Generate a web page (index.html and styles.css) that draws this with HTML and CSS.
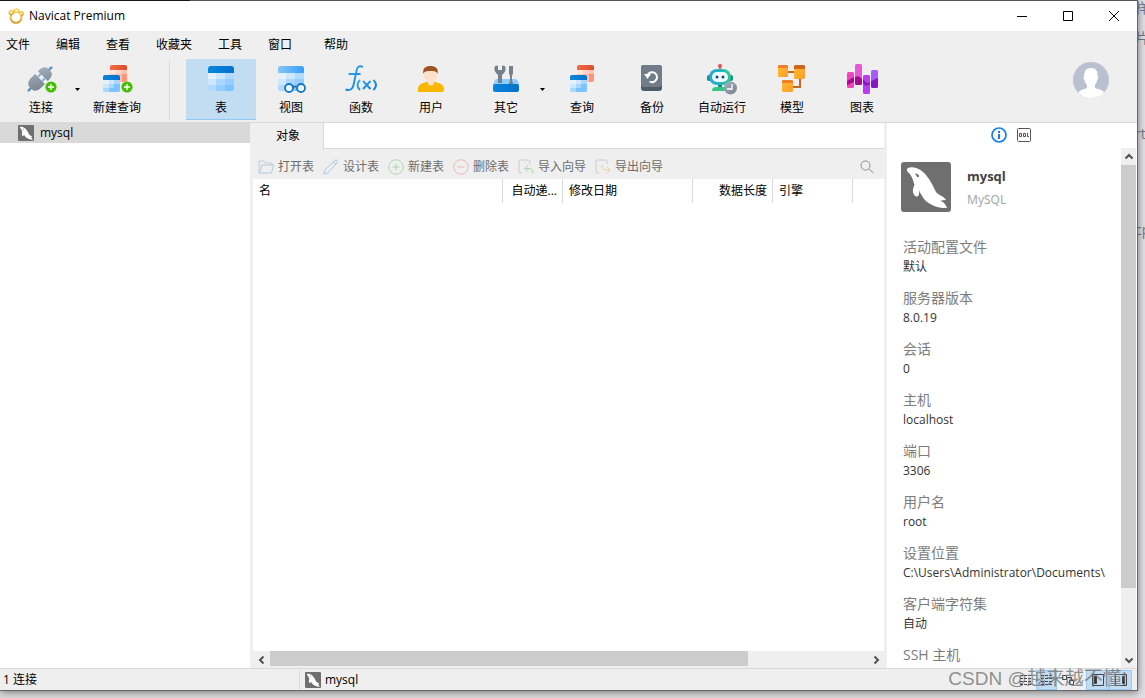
FILE: index.html
```html
<!DOCTYPE html>
<html lang="zh-CN">
<head>
<meta charset="utf-8">
<title>Navicat Premium</title>
<link rel="stylesheet" href="styles.css">
</head>
<body>
<svg class="defs" aria-hidden="true">
  <defs>
    <linearGradient id="g-head" x1="0" x2="1"><stop offset="0" stop-color="#0a86dc"/><stop offset="1" stop-color="#0272cc"/></linearGradient>
    <linearGradient id="g-view" x1="0" x2="1"><stop offset="0" stop-color="#85c5fb"/><stop offset="1" stop-color="#369ff6"/></linearGradient>
    <linearGradient id="g-red" x1="0" x2="1"><stop offset="0" stop-color="#f56a48"/><stop offset="1" stop-color="#d94e28"/></linearGradient>
    <linearGradient id="g-steel" x1="0" y1="0" x2="1" y2="1"><stop offset="0" stop-color="#a3b0bd"/><stop offset="1" stop-color="#77838f"/></linearGradient>
    <linearGradient id="g-fx" x1="0" y1="0" x2="1" y2="1"><stop offset="0" stop-color="#3aaaf8"/><stop offset="1" stop-color="#0a7ad5"/></linearGradient>
    <linearGradient id="g-bot" x1="0" x2="1"><stop offset="0" stop-color="#20a5e2"/><stop offset="1" stop-color="#2dc98c"/></linearGradient>
    <linearGradient id="g-gold" x1="0" y1="0" x2="0" y2="1"><stop offset="0" stop-color="#fbd85d"/><stop offset="1" stop-color="#d59a22"/></linearGradient>
    <linearGradient id="g-orange" x1="0" y1="0" x2="1" y2="1"><stop offset="0" stop-color="#ffbd2e"/><stop offset="1" stop-color="#ff9b2f"/></linearGradient>
    <clipPath id="c-grid"><rect width="26" height="25" rx="3"/></clipPath>
    <clipPath id="c-small"><rect width="17" height="17" rx="2"/></clipPath>
    <symbol id="cells" viewBox="0 0 26 25">
      <g clip-path="url(#c-grid)">
        <rect width="26" height="25" fill="#aad7ff"/>
        <path fill="#e3f2ff" d="M0 7h8v6H0z"/><path fill="#cce7ff" d="M8 7h9v6H8zM0 13h8v6H0z"/>
        <path fill="#b1daff" d="M17 7h9v6h-9zM0 19h8v6H0z"/><path fill="#94ceff" d="M17 13h9v6h-9zM8 19h9v6H8z"/><path fill="#7dc4ff" d="M17 19h9v6h-9z"/>
      </g>
    </symbol>
    <symbol id="query" viewBox="0 0 24 27">
      <g transform="translate(7 0)"><g clip-path="url(#c-small)"><rect width="17" height="17" fill="#ffc0b0"/><path fill="#ffe6df" d="M0 5h6v4H0z"/><path fill="#ffd2c6" d="M6 5h6v4H6z"/><path fill="#ff9578" d="M12 9h5v8h-5z"/><rect width="17" height="5" fill="url(#g-red)"/></g></g>
      <g transform="translate(0 10)"><g clip-path="url(#c-small)"><rect width="17" height="17" fill="#aad7ff"/><path fill="#e3f2ff" d="M0 5h6v4H0z"/><path fill="#cce7ff" d="M6 5h5v4H6zM0 9h6v4H0z"/><path fill="#7dc4ff" d="M11 9h6v8h-6zM6 13h5v4H6z"/><rect width="17" height="5" fill="url(#g-head)"/></g></g>
    </symbol>
    <symbol id="plus" viewBox="0 0 12 12"><circle cx="6" cy="6" r="5.6" fill="#45bd05"/><path d="M3 6h6M6 3v6" stroke="#fff" stroke-width="1.3"/></symbol>
    <symbol id="dolphin" viewBox="0 0 50 50">
      <rect width="50" height="50" rx="3" fill="#6f6f6f"/>
      <path fill="#fff" d="M7 6C10 4 18 6 22 10C28 15 32 24 35 30C37 33 43 34 45 38L39.500 38.500C43 40 45 43 46 46C38 46.500 28 43 23 37C21 34 19 31 18 28C18.500 32 18 35 15 34.500C12 33 10.500 28 13.500 23C12 18 11 14 8 11C6 10 5 7 7 6z"/>
      <path fill="#6f6f6f" d="M14 11.500c2 0 4 1 4 2.500s-1.500 1.500-2.200.5z"/>
    </symbol>
  </defs>
</svg>

<div class="desktop">
  <aside class="backdrop" aria-hidden="true">
    <span class="scrap scrap-a">样</span><span class="scrap scrap-b">片</span><span class="scrap scrap-c">rt</span><span class="scrap scrap-d">cp</span>
  </aside>
  <main class="window">
    <header class="titlebar">
      <svg class="app-logo" viewBox="0 0 17 17" fill="none" stroke="url(#g-gold)"><circle cx="8.500" cy="10" r="5.800" stroke-width="2"/><path stroke-width="1.500" d="M3.500 7C1.500 7 .8 5 2 3.500S5.300 2.500 6 4M7 5C6 3 7 1 9 1s3 1.500 2.500 3.500M12 5c1-1.500 3-1.500 3.700 0s.3 3-1.500 3.500M3 8l3-3"/></svg>
      <h1 class="app-title">Navicat Premium</h1>
      <div class="window-controls">
        <button class="control" aria-label="最小化"><svg viewBox="0 0 10 10"><path d="M0 5.500h10"/></svg></button>
        <button class="control" aria-label="最大化"><svg viewBox="0 0 10 10"><path d="M.5.5h9v9h-9z"/></svg></button>
        <button class="control" aria-label="关闭"><svg viewBox="0 0 10 10"><path d="M0 0l10 10M10 0L0 10"/></svg></button>
      </div>
    </header>

    <nav class="menubar">
      <button>文件</button><button>编辑</button><button>查看</button><button>收藏夹</button><button>工具</button><button>窗口</button><button class="menu-help">帮助</button>
    </nav>

    <div class="toolbar">
      <div class="split">
        <button class="tool tool-split">
          <svg class="tool-icon" viewBox="0 0 32 32"><g transform="rotate(45 15 16)"><path d="M15-1v6M15 27v6" stroke="#5e93bd" stroke-width="2.500"/><path d="M12 10v6M18 10v6" stroke="#77b5df" stroke-width="2"/><path fill="url(#g-steel)" d="M12 3h6c3 1 4 4 4 9H8c0-5 1-8 4-9zM8 16h14v5c0 5-2 7-4 8h-6c-2-1-4-3-4-8z"/></g><use href="#plus" x="20" y="18" width="12" height="12"/></svg>
          <span>连接</span>
        </button>
        <button class="drop" aria-label="连接选项"><svg viewBox="0 0 5 3"><path d="M0 0h5L2.500 3z"/></svg></button>
      </div>
      <button class="tool">
        <svg class="tool-icon" viewBox="0 0 32 32"><use href="#query" x="2" y="2" width="24" height="27"/><use href="#plus" x="20" y="18" width="12" height="12"/></svg>
        <span>新建查询</span>
      </button>
      <span class="tool-separator"></span>
      <button class="tool is-active">
        <svg class="tool-icon" viewBox="0 0 32 32"><use href="#cells" x="3" y="3" width="26" height="25"/><path fill="url(#g-head)" d="M3 10V6a3 3 0 0 1 3-3h20a3 3 0 0 1 3 3v4z"/></svg>
        <span>表</span>
      </button>
      <button class="tool">
        <svg class="tool-icon" viewBox="0 0 32 32"><use href="#cells" x="3" y="3" width="26" height="25"/><path fill="url(#g-view)" d="M3 10V6a3 3 0 0 1 3-3h20a3 3 0 0 1 3 3v4z"/><g fill="#eef8ff" stroke="#1477c4" stroke-width="1.800"><path d="M17 24q2-1 4 0"/><circle cx="14" cy="25" r="4"/><circle cx="26" cy="25" r="4"/></g></svg>
        <span>视图</span>
      </button>
      <button class="tool">
        <svg class="tool-icon" viewBox="0 0 32 32" fill="none" stroke="url(#g-fx)" stroke-width="1.900"><path d="M18 4c-4-2-6 0-6.500 4L8.500 22c-.8 4-3 6-8 4.500M3.500 11h12"/><path d="M15 17q-5 5 0 10M28.500 17q5 5 0 10M18 18l7.500 8M25.500 18L18 26"/></svg>
        <span>函数</span>
      </button>
      <button class="tool">
        <svg class="tool-icon" viewBox="0 0 32 32"><path fill="#f9b700" d="M3 29v-4c1-4 5-5 8-6h9c4 1 8 2 9 6v2l-1 2z"/><path fill="#ffe0ca" d="M9 9q6-3 13 0c1 5-1 8-3 10v2q-3 3-6 0v-2c-2-2-5-5-4-10z"/><path fill="#9e5421" d="M8.500 11C7 5 11 3 15.500 3s8.500 2 7 8c-1-3-3-3-7-3s-6 0-7 3z"/></svg>
        <span>用户</span>
      </button>
      <div class="split">
        <button class="tool tool-split">
          <svg class="tool-icon" viewBox="0 0 32 32"><path fill="#8cccff" d="M3 22l2-5q1-1 3-1h17q2 0 3 2l1 4z"/><path fill="#74808b" d="M5 3l3-.5V7h4V2.500l3 .5q2 5-3 9v8H8v-8Q3 8 5 3zM19 3h4v7l-1 3v4l1 4h-4l1-4v-4l-1-3z"/><rect x="3" y="21" width="26" height="8" rx="2" fill="url(#g-head)"/></svg>
          <span>其它</span>
        </button>
        <button class="drop" aria-label="其它选项"><svg viewBox="0 0 5 3"><path d="M0 0h5L2.500 3z"/></svg></button>
      </div>
      <button class="tool">
        <svg class="tool-icon" viewBox="0 0 32 32"><use href="#query" x="4" y="2" width="24" height="27"/></svg>
        <span>查询</span>
      </button>
      <button class="tool">
        <svg class="tool-icon" viewBox="0 0 32 32"><rect x="5" y="2" width="21" height="26" rx="3" fill="#505c65"/><rect x="5" y="2" width="21" height="22" rx="3" fill="#707d88"/><path fill="none" stroke="#fff" stroke-width="2" d="M11.500 12a5 5 0 1 1 2 6.500"/><path fill="#fff" d="M8 11h7l-3.500 5z"/></svg>
        <span>备份</span>
      </button>
      <button class="tool">
        <svg class="tool-icon" viewBox="0 0 32 32"><path d="M14 4v4" stroke="#d35251" stroke-width="1.500"/><circle cx="14" cy="3" r="2" fill="#ef4a4b"/><rect x="1" y="12" width="26" height="6" rx="2" fill="#128d88"/><path fill="#108a88" d="M12 21h4v4h-4z"/><path fill="#31c787" d="M6 28q0-4 4-4h12v4z"/><rect x="3" y="6" width="22" height="16" rx="8" fill="url(#g-bot)"/><rect x="6" y="9" width="16" height="10" rx="5" fill="#effaff"/><circle cx="11" cy="14" r="1.500" fill="#17488f"/><circle cx="17" cy="14" r="1.500" fill="#17488f"/><circle cx="24.500" cy="25" r="6.500" fill="url(#g-steel)"/><path fill="none" stroke="#fff" stroke-width="1.300" d="M26 21v5h-5"/></svg>
        <span>自动运行</span>
      </button>
      <button class="tool">
        <svg class="tool-icon" viewBox="0 0 32 32"><path d="M12 9h8M24 14v10h-8" fill="none" stroke="#c06a21" stroke-width="2"/><g fill="url(#g-orange)"><rect x="2" y="2" width="10" height="12" rx="1.500"/><rect x="18" y="2" width="11" height="14" rx="1.500"/><rect x="6" y="17" width="11" height="12" rx="1.500"/></g><path fill="#f27d2d" d="M2 5V3l1-1h8l1 1v2zM6 20v-2l1-1h9l1 1v2z"/><path fill="#cf681c" d="M18 6V3l1-1h9l1 1v3z"/></svg>
        <span>模型</span>
      </button>
      <button class="tool">
        <svg class="tool-icon" viewBox="0 0 32 32"><rect x="1" y="9" width="7" height="16" rx="1.500" fill="#f444ba"/><rect x="9" y="1" width="7" height="21" rx="1.500" fill="#e659d4"/><rect x="17" y="12" width="7" height="19" rx="1.500" fill="#b93cf0"/><rect x="25" y="7" width="7" height="18" rx="1.500" fill="#a45cff"/><path fill="#a90992" d="M1 18l7-4v5l-7 3zM9 14q4-2 7 2v5l-1 1h-5l-1-1z"/><path fill="#8518c6" d="M17 16q4 6 7 3v2q-4 4-7-1zM25 18l7-3v8l-1 2h-5l-1-2z"/></svg>
        <span>图表</span>
      </button>
      <button class="avatar" aria-label="用户帐户"><svg viewBox="0 0 36 36"><circle cx="18" cy="18" r="18" fill="#b9c1d0"/><path fill="#fff" d="M18 6c5 0 7 3 6.500 8 1 .5 1 3-.3 4-.5 3-2 4-2.200 5v3c3 1.500 7 1 9 4.500C27 35 22 36 18 36S9 35 5.500 30.500C8 27 11 27.500 14 26v-3c-.5-1-2-2-2.500-5-1-1-1.300-3.500-.2-4C11 9 13 6 18 6z"/></svg></button>
    </div>

    <div class="workspace">
      <ul class="connections">
        <li class="connection"><svg class="mini-logo"><use href="#dolphin"/></svg>mysql</li>
      </ul>

      <section class="objects">
        <div class="tabs"><button class="tab">对象</button><div class="tabs-rest"></div></div>
        <div class="object-tools">
          <button disabled><svg viewBox="0 0 16 16"><path stroke="#c5cdd3" d="M1 13V2h5l1 2h7v2"/><path stroke="#a9c9e2" d="M1 14L4 6h11.500l-2 8z"/></svg>打开表</button>
          <button disabled><svg viewBox="0 0 16 16"><path stroke="#a9c9e2" d="M.8 15l1-4L12 1.500q1-1 2 0t0 2.500L4.500 14zM10.500 3l2.500 2.500"/></svg>设计表</button>
          <button disabled><svg viewBox="0 0 16 16"><path stroke="#b3d6ae" d="M8 .8a7.200 7.200 0 1 0 .01 0M4.500 8h7M8 4.500v7"/></svg>新建表</button>
          <button disabled><svg viewBox="0 0 16 16"><path stroke="#e9b8b5" d="M8 .8a7.200 7.200 0 1 0 .01 0M4.500 8h7"/></svg>删除表</button>
          <button disabled><svg viewBox="0 0 16 16"><path stroke="#c8c8c8" d="M4 14H2.500Q1 14 1 12.500V2.500Q1 1 2.500 1h8Q12 1 12 2.500V5"/><path stroke="#a9d6a6" d="M10 6L7 9.500l3 3M7 9.500h4q4 0 4 5"/></svg>导入向导</button>
          <button disabled><svg viewBox="0 0 16 16"><path stroke="#c8c8c8" d="M4 14H2.500Q1 14 1 12.500V2.500Q1 1 2.500 1h8Q12 1 12 2.500V5"/><path stroke="#efcda5" d="M7 6q0 5 4 5h4M12 8l3 3-3 3.500"/></svg>导出向导</button>
          <button class="search" aria-label="搜索"><svg viewBox="0 0 16 16"><path stroke="#888" d="M6.500 2a4.500 4.500 0 1 0 .01 0M10 10l4.500 4"/></svg></button>
        </div>
        <div class="object-list">
          <table>
            <colgroup><col class="col-name"><col class="col-auto"><col class="col-date"><col class="col-size"><col class="col-engine"><col></colgroup>
            <thead><tr><th scope="col">名</th><th scope="col" class="right">自动递...</th><th scope="col">修改日期</th><th scope="col" class="right">数据长度</th><th scope="col">引擎</th><td></td></tr></thead>
          </table>
        </div>
        <div class="scroll-x">
          <button aria-label="向左滚动"><svg viewBox="0 0 10 10"><path d="M6.500 1.500L3 5l3.500 3.500"/></svg></button>
          <div class="track"><div class="thumb"></div></div>
          <button aria-label="向右滚动"><svg viewBox="0 0 10 10"><path d="M3.500 1.500L7 5 3.500 8.500"/></svg></button>
        </div>
      </section>

      <aside class="info">
        <div class="info-tabs">
          <button aria-label="信息"><svg viewBox="0 0 16 16"><circle cx="8" cy="8" r="7" fill="none" stroke="#147df5" stroke-width="1.700"/><path fill="#147df5" d="M7 4h2v2H7zM7 7h2v5H7z"/></svg></button>
          <button aria-label="DDL"><svg viewBox="0 0 16 16" fill="none" stroke="#555"><rect x="1.500" y="1.500" width="13" height="13" rx="1"/><path d="M3.500 6.500h2v3h-2zM7.500 6.500h2v3h-2zM11.500 6v3.500H13"/></svg></button>
        </div>
        <div class="info-body">
          <div class="info-content">
            <div class="identity">
              <svg class="logo"><use href="#dolphin"/></svg>
              <div><h2>mysql</h2><p>MySQL</p></div>
            </div>
            <dl>
              <div><dt>活动配置文件</dt><dd>默认</dd></div>
              <div><dt>服务器版本</dt><dd>8.0.19</dd></div>
              <div><dt>会话</dt><dd>0</dd></div>
              <div><dt>主机</dt><dd>localhost</dd></div>
              <div><dt>端口</dt><dd>3306</dd></div>
              <div><dt>用户名</dt><dd>root</dd></div>
              <div><dt>设置位置</dt><dd>C:\Users\Administrator\Documents\</dd></div>
              <div><dt>客户端字符集</dt><dd>自动</dd></div>
              <div><dt>SSH 主机</dt><dd></dd></div>
            </dl>
          </div>
          <div class="scroll-y">
            <button aria-label="向上滚动"><svg viewBox="0 0 10 10"><path d="M1.500 6.500L5 3l3.500 3.500"/></svg></button>
            <div class="track"><div class="thumb"></div></div>
            <button aria-label="向下滚动"><svg viewBox="0 0 10 10"><path d="M1.500 3.500L5 7l3.500-3.500"/></svg></button>
          </div>
        </div>
      </aside>
    </div>

    <footer class="statusbar">
      <span class="status-count">1 连接</span>
      <span class="status-connection"><svg class="mini-logo"><use href="#dolphin"/></svg>mysql</span>
      <div class="view-buttons">
        <button aria-label="列表"><svg viewBox="0 0 16 16"><path stroke-dasharray="3 1" d="M2 3.500h12M2 6.500h12M2 9.500h12M2 12.500h12"/></svg></button>
        <button class="is-on" aria-label="详细信息"><svg viewBox="0 0 16 16"><path stroke-dasharray="3 1" d="M2 3.500h12M2 6.500h12M2 9.500h12M2 12.500h12"/></svg></button>
        <button aria-label="ER 图表"><svg viewBox="0 0 16 16"><path d="M2.500 3.500h4v4h-4zM9.500 8.500h4v4h-4zM7 5.500h4.500v3"/></svg></button>
      </div>
      <div class="view-buttons panes">
        <button class="is-on" aria-label="导航窗格"><svg viewBox="0 0 16 16"><path d="M2.500 2.500h11v11h-11z"/><path fill="#333" d="M4.500 4.500h2v7h-2z"/></svg></button>
        <button class="is-on" aria-label="信息窗格"><svg viewBox="0 0 16 16"><path d="M2.500 2.500h11v11h-11z"/><path fill="#333" d="M9.500 4.500h2v7h-2z"/></svg></button>
      </div>
    </footer>
  </main>
  <p class="watermark">CSDN @越来越不懂!</p>
</div>
</body>
</html>
```
FILE: styles.css
```css
:root {
  --chrome: #efefef;
  --line: #d9d9d9;
  --thumb: #cccccc;
  --blue: #c2dcf2;
}

* { box-sizing: border-box; }

body {
  margin: 0;
  font: 12px/16px "Open Sans", "Noto Sans CJK SC", sans-serif;
  color: #000;
}

button {
  margin: 0;
  padding: 0;
  border: 0;
  background: none;
  font: inherit;
  color: inherit;
}

h1, h2, p, ul, dl, dd { margin: 0; padding: 0; font-weight: normal; }
svg { display: block; flex: none; }
.defs { position: absolute; width: 0; height: 0; }

.desktop {
  position: relative;
  height: 100vh;
  padding: 1px 7px 7px 0;
  background: linear-gradient(90deg, #1d1a1d 0 190px, #666 190px) top / 100% 1px no-repeat, #dedede;
  overflow: hidden;
}

/* Page showing behind the window's right edge */
.backdrop {
  position: absolute;
  inset: 0 0 0 auto;
  width: 7px;
  overflow: hidden;
  color: #77778c;
  font-size: 14px;
  background: #e2e2e5;
}
.scrap { position: absolute; left: -3px; }
.scrap-a { top: 0; }
.scrap-b { top: 30px; }
.scrap-c { top: 126px; }
.scrap-d { top: 222px; }

.window {
  position: relative;
  display: flex;
  flex-direction: column;
  height: 100%;
  background: #fff;
  border: solid #68686a;
  border-width: 0 1px 1px 0;
  box-shadow: 0 1px 8px rgba(0, 0, 0, .5);
}

.titlebar { display: flex; align-items: center; height: 30px; padding-left: 8px; }
.app-logo { width: 16px; height: 16px; }
.app-title { margin-left: 5px; font-size: 12px; }
.window-controls { display: flex; align-self: stretch; margin-left: auto; }
.control { display: grid; place-items: center; width: 46px; }
.control svg { width: 10px; height: 10px; fill: none; stroke: #000; overflow: visible; }

.menubar { display: flex; align-items: center; gap: 26px; height: 27px; padding-left: 6px; background: var(--chrome); }
.menu-help { margin-left: 6px; }

.toolbar {
  display: flex;
  align-items: center;
  height: 65px;
  padding: 1px 28px 2px 1px;
  background: var(--chrome);
  border-bottom: 1px solid var(--line);
}
.split { display: flex; align-items: center; margin: 0 0 0 8px; }
.tool {
  display: flex;
  flex-direction: column;
  align-items: center;
  gap: 5px;
  width: 70px;
  height: 61px;
  padding-top: 4px;
  white-space: nowrap;
}
.tool-split { width: 64px; }
.tool.is-active { background: var(--blue); border-bottom: 1px solid #90c8f6; }
.tool-icon { width: 32px; height: 32px; }
.drop { display: grid; place-items: center; width: 9px; }
.drop svg { width: 5px; height: 3px; }
.tool-separator { align-self: center; width: 1px; height: 59px; margin: 0 16px 0 17px; background: var(--line); }
.avatar { align-self: flex-start; margin: 3px 0 0 auto; }
.avatar svg { width: 36px; height: 36px; }

.workspace { display: flex; flex: 1; min-height: 0; background: var(--chrome); }
.connections { width: 250px; flex: none; background: #fff; list-style: none; }
.connection { display: flex; align-items: center; gap: 6px; height: 20px; padding-left: 18px; background: var(--line); }
.mini-logo { width: 16px; height: 16px; }

.objects { display: flex; flex-direction: column; flex: 1; min-width: 0; padding: 0 3px; }
.tabs { display: flex; height: 26px; }
.tab { width: 70px; }
.tabs-rest { flex: 1; background: #fff; border: solid var(--line); border-width: 0 0 1px 1px; }
.object-tools { display: flex; align-items: center; gap: 9px; height: 30px; padding: 5px 9px 0 5px; }
.object-tools button { display: flex; align-items: center; gap: 4px; color: #6d6d6d; white-space: nowrap; }
.object-tools svg { width: 16px; height: 16px; fill: none; }
.object-tools .search { margin-left: auto; }

.object-list { flex: 1; background: #fff; overflow: hidden; }
table { width: 100%; table-layout: fixed; border-spacing: 0; }
th, td { height: 24px; padding: 0 5px; border-right: 1px solid var(--line); font-weight: normal; text-align: left; white-space: nowrap; }
td { border-right: 0; }
th { padding-left: 6px; }
th.right { text-align: right; }
.col-name { width: 250px; }
.col-auto { width: 60px; }
.col-date { width: 130px; }
.col-size, .col-engine { width: 80px; }

.scroll-x { display: flex; height: 17px; }
.scroll-x button, .scroll-y button { display: grid; place-items: center; width: 17px; height: 17px; }
.scroll-x .track, .scroll-y .track { flex: 1; }
.scroll-x .thumb { width: 80%; height: 15px; background: var(--thumb); }
.scroll-x svg, .scroll-y svg { width: 10px; height: 10px; fill: none; stroke: #505050; stroke-width: 2; }

.info { display: flex; flex-direction: column; width: 250px; flex: none; padding-right: 1px; background: #fff; }
.info-tabs { display: flex; align-items: center; justify-content: center; gap: 9px; height: 25px; padding-bottom: 1px; flex: none; }
.info-tabs svg { width: 16px; height: 16px; }
.info-body { display: flex; flex: 1; min-height: 0; }
.info-content { flex: 1; min-width: 0; padding: 14px 0 0 14px; overflow: hidden; }
.identity { display: flex; gap: 16px; }
.logo { width: 50px; height: 50px; }
.identity h2 { padding-top: 6px; font-size: 13px; font-weight: bold; color: #444; }
.identity p { padding-top: 8px; font-family: "Noto Sans", sans-serif; color: #a8a8a8; }
dl { padding: 25px 0 0 2px; }
dl div { height: 51px; }
dt { font-size: 14px; line-height: 20px; color: #7d7d7d; }
dd { line-height: 20px; color: #333; white-space: nowrap; }
.scroll-y { display: flex; flex-direction: column; width: 15px; background: var(--chrome); }
.scroll-y button { width: 15px; }
.scroll-y .thumb { width: 15px; height: 87%; background: var(--thumb); }

.statusbar { display: flex; align-items: center; flex: none; height: 22px; padding-right: 5px; background: var(--chrome); border-top: 1px solid var(--line); }
.status-count { width: 299px; padding-left: 3px; }
.status-connection { display: flex; align-items: center; gap: 4px; height: 20px; padding-left: 5px; border-left: 1px solid var(--line); margin-right: auto; }
.view-buttons { display: flex; height: 20px; margin-left: 8px; }
.view-buttons button { display: grid; place-items: center; width: 21px; }
.panes button { width: 23px; }
.view-buttons .is-on { background: var(--blue); border: 1px solid #96c9f3; }
.view-buttons svg { width: 16px; height: 16px; fill: none; stroke: #444; }

.watermark {
  position: absolute;
  right: 18px;
  bottom: 7px;
  font: 19px/24px "Liberation Sans", "Noto Sans CJK SC", sans-serif;
  color: rgba(110, 110, 110, .75);
  white-space: nowrap;
}
```
